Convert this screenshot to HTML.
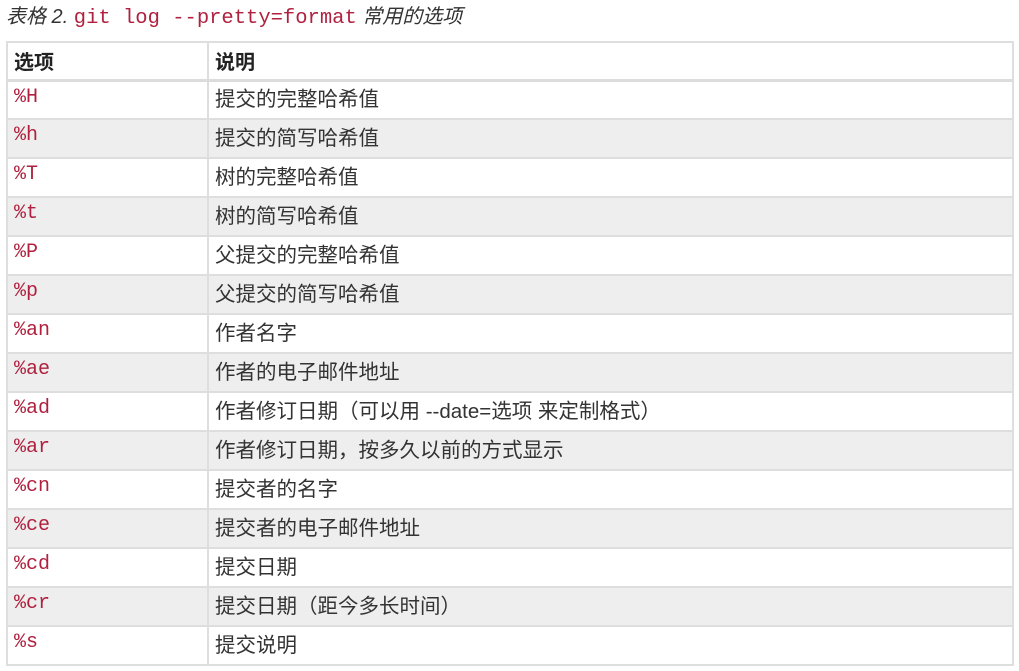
<!DOCTYPE html>
<html><head><meta charset="utf-8"><style>
body{margin:0;background:#fff;width:1019px;height:671px;overflow:hidden;font-family:"Liberation Sans","Noto Sans CJK SC",sans-serif;color:#333}
.cap{position:absolute;left:6px;top:5px;font-size:20px;font-style:italic;color:#333;white-space:nowrap;line-height:24px}
.cap code{font-family:"Liberation Mono",monospace;font-style:normal;color:#b0213f;font-size:20.5px}
table{position:absolute;left:6px;top:41px;width:1008px;border-collapse:collapse;border:2px solid #e2e2e2}
tr{height:39px}
tr.h{height:38px}
td,th{border:2px solid #dedede;padding:0 6px;font-size:20.5px;text-align:left;vertical-align:middle;box-sizing:border-box}
td{padding-bottom:6px}
th{font-weight:bold;color:#222;border-bottom:3px solid #dcdcdc;font-size:20px}
td:first-child,th:first-child{width:201px}
td:first-child{font-family:"Liberation Mono",monospace;color:#b0213f;font-size:20px;vertical-align:top;padding-top:4px;padding-bottom:0}
tr:nth-child(odd) td{background:#eeeeee}
</style></head><body>
<div class="cap">表格 2. <code>git log --pretty=format</code> 常用的选项</div>
<table>
<tr class="h"><th>选项</th><th>说明</th></tr>
<tr><td>%H</td><td>提交的完整哈希值</td></tr>
<tr><td>%h</td><td>提交的简写哈希值</td></tr>
<tr><td>%T</td><td>树的完整哈希值</td></tr>
<tr><td>%t</td><td>树的简写哈希值</td></tr>
<tr><td>%P</td><td>父提交的完整哈希值</td></tr>
<tr><td>%p</td><td>父提交的简写哈希值</td></tr>
<tr><td>%an</td><td>作者名字</td></tr>
<tr><td>%ae</td><td>作者的电子邮件地址</td></tr>
<tr><td>%ad</td><td>作者修订日期（可以用 --date=选项 来定制格式）</td></tr>
<tr><td>%ar</td><td>作者修订日期，按多久以前的方式显示</td></tr>
<tr><td>%cn</td><td>提交者的名字</td></tr>
<tr><td>%ce</td><td>提交者的电子邮件地址</td></tr>
<tr><td>%cd</td><td>提交日期</td></tr>
<tr><td>%cr</td><td>提交日期（距今多长时间）</td></tr>
<tr><td>%s</td><td>提交说明</td></tr>
</table>
</body></html>
